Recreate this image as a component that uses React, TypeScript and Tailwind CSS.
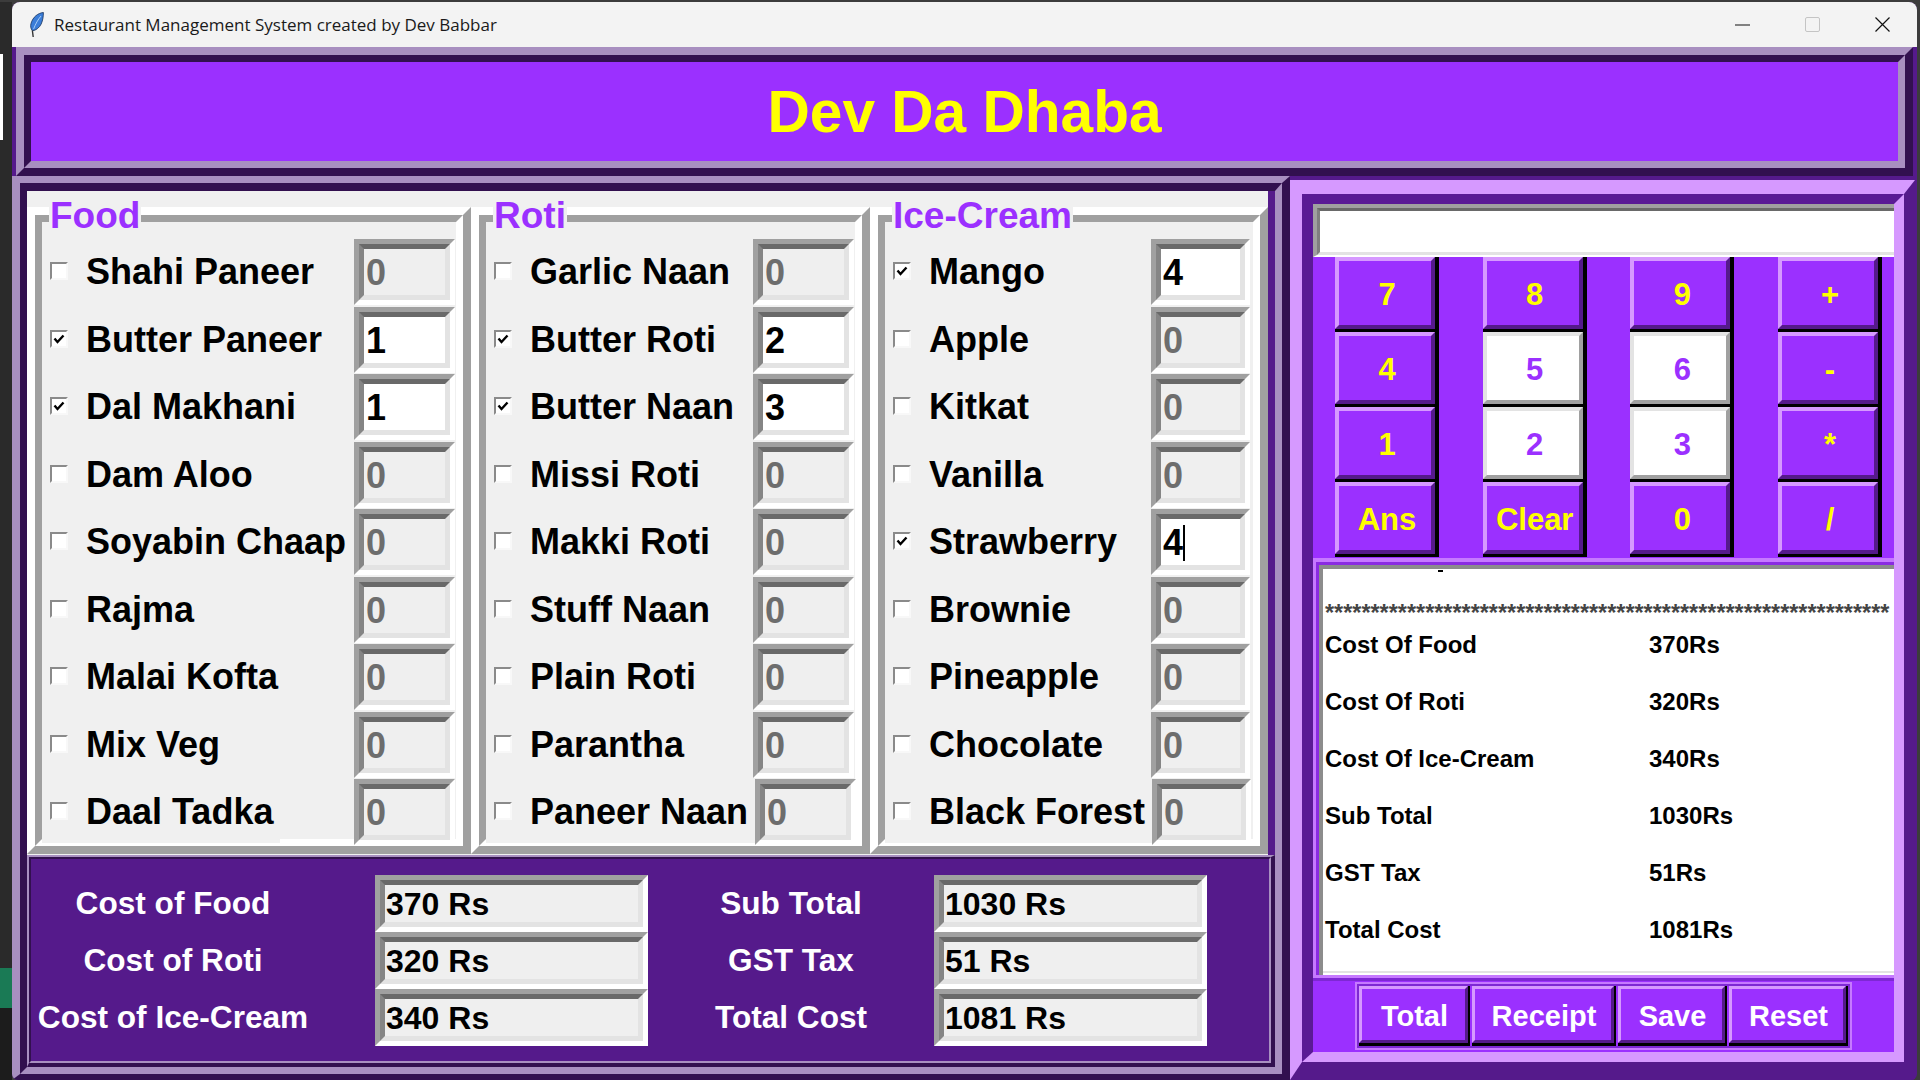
const food = [
  ["Shahi Paneer", "0"],
  ["Butter Paneer", "1"],
  ["Dal Makhani", "1"],
  ["Dam Aloo", "0"],
  ["Soyabin Chaap", "0"],
  ["Rajma", "0"],
  ["Malai Kofta", "0"],
  ["Mix Veg", "0"],
  ["Daal Tadka", "0"],
];

const roti = [
  ["Garlic Naan", "0"],
  ["Butter Roti", "2"],
  ["Butter Naan", "3"],
  ["Missi Roti", "0"],
  ["Makki Roti", "0"],
  ["Stuff Naan", "0"],
  ["Plain Roti", "0"],
  ["Parantha", "0"],
  ["Paneer Naan", "0"],
];

const iceCream = [
  ["Mango", "4"],
  ["Apple", "0"],
  ["Kitkat", "0"],
  ["Vanilla", "0"],
  ["Strawberry", "4"],
  ["Brownie", "0"],
  ["Pineapple", "0"],
  ["Chocolate", "0"],
  ["Black Forest", "0"],
];

const calcKeys = [
  { key: "7" },
  { key: "8" },
  { key: "9" },
  { key: "+" },
  { key: "4" },
  { key: "5", white: true },
  { key: "6", white: true },
  { key: "-" },
  { key: "1" },
  { key: "2", white: true },
  { key: "3", white: true },
  { key: "*" },
  { key: "Ans" },
  { key: "Clear" },
  { key: "0" },
  { key: "/" },
];

const receiptLines = [
  ["Cost Of Food", "370Rs"],
  ["Cost Of Roti", "320Rs"],
  ["Cost Of Ice-Cream", "340Rs"],
  ["Sub Total", "1030Rs"],
  ["GST Tax", "51Rs"],
  ["Total Cost", "1081Rs"],
];

const actions = [
  { label: "Total", width: "w-[111px]" },
  { label: "Receipt", width: "w-[144px]" },
  { label: "Save", width: "w-[109px]" },
  { label: "Reset", width: "w-[119px]" },
];

function Feather() {
  return (
    <svg viewBox="0 0 14 26" className="w-[14px] h-[26px] shrink-0">
      <path d="M13.4 0.5C8 1 2.8 5 1 11.5C0.3 14 0.6 16.5 2.4 18.8C6 18.5 9.5 15.5 11.2 12C13 8 13.4 4 13.4 0.5Z" fill="#3b7dd8" stroke="#16325c" strokeWidth="0.8" />
      <path d="M11 4C8 7.5 5.5 12 3.6 17" fill="none" stroke="#a8cdf5" strokeWidth="1" />
      <path d="M2.4 18.5L3.2 25" fill="none" stroke="#333" strokeWidth="1.4" />
    </svg>
  );
}

function WindowControls() {
  return (
    <div className="flex items-center">
      <svg viewBox="0 0 15 15" className="w-[15px] h-[15px] mr-[55px]">
        <path d="M0 8H15" stroke="#111" strokeWidth="1.2" />
      </svg>
      <svg viewBox="0 0 15 15" className="w-[15px] h-[15px] mr-[55px]">
        <rect x="0.5" y="0.5" width="14" height="14" rx="1.5" fill="none" stroke="#c4c4c4" strokeWidth="1" />
      </svg>
      <svg viewBox="0 0 15 15" className="w-[15px] h-[15px]">
        <path d="M0.5 0.5L14.5 14.5M14.5 0.5L0.5 14.5" stroke="#111" strokeWidth="1.2" />
      </svg>
    </div>
  );
}

function Checkbox({ checked }: { checked: boolean }) {
  return (
    <div className="w-[18px] h-[18px] shrink-0 border-2 border-t-[#8a8a8a] border-l-[#8a8a8a] border-r-[#f8f8f8] border-b-[#f8f8f8] bg-white">
      {checked && (
        <svg viewBox="0 0 14 14" className="w-[14px] h-[14px]">
          <path d="M2.5 6.5L5.5 10L11.5 3.5" fill="none" stroke="#000" strokeWidth="2.4" />
        </svg>
      )}
    </div>
  );
}

function QtyEntry({ value, width, caret }: { value: string; width: string; caret?: boolean }) {
  const active = value !== "0";
  return (
    <div className={`${width} h-[66px] shrink-0 border-[5px] border-t-[#a0a0a0] border-l-[#a0a0a0] border-r-white border-b-white`}>
      <div className={`h-full flex items-center pl-[2px] pt-[2px] border-[5px] border-t-[#696969] border-l-[#858585] border-r-[#e3e3e3] border-b-[#e3e3e3] text-[36px] font-bold leading-none ${active ? "bg-white text-black" : "bg-[#efefef] text-[#6d6d6d]"}`}>
        {value}
        {caret && <span className="w-[2px] h-[36px] bg-black" />}
      </div>
    </div>
  );
}

function MenuFrame({ title, items, width, entryWidth, pr }: { title: string; items: string[][]; width: string; entryWidth: string; pr: string }) {
  return (
    <div className={`${width} h-full relative border-[8px] border-t-white border-l-white border-r-[#a0a0a0] border-b-[#a0a0a0]`}>
      <div className="h-full border-[7px] border-t-[#a0a0a0] border-l-[#a0a0a0] border-r-white border-b-white">
        <div className={`pt-[17px] ${pr}`}>
          {items.map(([name, value]) => (
            <div key={name} className="flex items-start justify-between h-[66px] mb-[1.5px]">
              <div className="flex items-center h-[64px] pl-[8px] pr-[7px] bg-[#f0f0f0]">
                <Checkbox checked={value !== "0"} />
                <span className="ml-[18px] pt-[2px] text-[36px] font-bold text-black leading-none whitespace-nowrap">{name}</span>
              </div>
              <QtyEntry value={value} width={entryWidth} caret={name === "Strawberry"} />
            </div>
          ))}
        </div>
      </div>
      <div className="absolute left-[14px] top-[-18px] px-[1px] bg-[#f0f0f0] text-[37px] font-bold text-[#9b30ff] leading-[38px]">{title}</div>
    </div>
  );
}

function CostEntry({ value, width }: { value: string; width: string }) {
  return (
    <div className={`${width} h-[57px] border-[5px] border-t-[#a0a0a0] border-l-[#a0a0a0] border-r-white border-b-white`}>
      <div className="h-full flex items-center pl-[1px] border-[5px] border-t-[#696969] border-l-[#858585] border-r-[#e3e3e3] border-b-[#e3e3e3] bg-[#efefef] text-[32px] font-bold text-black leading-none">
        {value}
      </div>
    </div>
  );
}

function CostRow({ left, leftValue, right, rightValue }: { left: string; leftValue: string; right: string; rightValue: string }) {
  return (
    <div className="flex items-center h-[57px]">
      <div className="w-[284px] mr-[60px] text-center text-[31.6px] font-bold text-white whitespace-nowrap">{left}</div>
      <CostEntry value={leftValue} width="w-[273px]" />
      <div className="w-[286px] text-center text-[31.6px] font-bold text-white whitespace-nowrap">{right}</div>
      <CostEntry value={rightValue} width="w-[273px]" />
    </div>
  );
}

function CalcButton({ label, white }: { label: string; white?: boolean }) {
  return (
    <div className="h-[75px] border-r-[4px] border-b-[3px] border-black">
      <div className={`h-full flex items-center justify-center pl-[4px] pt-[3px] border-[4px] text-[31px] font-bold leading-none ${white ? "bg-white text-[#9b30ff] border-t-[#e3e3e3] border-l-[#e3e3e3] border-r-[#a0a0a0] border-b-[#a0a0a0]" : "bg-[#9b30ff] text-[#ffff00] border-t-[#d699ff] border-l-[#d699ff] border-r-[#551a8b] border-b-[#551a8b]"}`}>
        {label}
      </div>
    </div>
  );
}

export default function App() {
  return (
    <div className="w-[1920px] h-[1080px] flex pt-[2px] pr-[3px] bg-[#3c3c3c] overflow-hidden font-['Liberation_Sans',sans-serif]">
      {/* desktop behind the window */}
      <div className="w-[12px] h-full flex flex-col bg-[#2a2a2a]">
        <div className="h-[52px]" />
        <div className="w-[3px] h-[86px] bg-white" />
        <div className="h-[828px]" />
        <div className="h-[40px] bg-[#1a7a55]" />
        <div className="flex-1 bg-[#1c1c1c]" />
      </div>

      <div className="flex-1 h-full flex flex-col rounded-t-[8px] rounded-b-[6px] overflow-hidden bg-[#551a8b]">
        {/* title bar */}
        <div className="h-[45px] shrink-0 flex items-center justify-between pl-[18px] pr-[27px] bg-[#f3f3f3]">
          <div className="flex items-center">
            <Feather />
            <span className="ml-[10px] text-[17px] text-[#1a1a1a] font-['Open_Sans',sans-serif] whitespace-nowrap">Restaurant Management System created by Dev Babbar</span>
          </div>
          <WindowControls />
        </div>

        {/* header */}
        <div className="h-[129px] shrink-0 ml-[4px] mr-[4px] border-[8px] border-t-[#a88fc0] border-l-[#a88fc0] border-r-[#32104f] border-b-[#32104f]">
          <div className="h-full flex items-center justify-center pt-[2px] border-[7px] border-t-[#32104f] border-l-[#32104f] border-r-[#a88fc0] border-b-[#a88fc0] bg-[#9b30ff]">
            <h1 className="text-[58.6px] font-bold text-[#ffff00] leading-none">Dev Da Dhaba</h1>
          </div>
        </div>

        <div className="flex-1 flex min-h-0">
          {/* left panel */}
          <div className="w-[1278px] h-[904px] shrink-0 border-[8px] border-t-[7px] border-b-[6px] border-t-[#a88fc0] border-l-[#a88fc0] border-r-[#32104f] border-b-[#32104f]">
            <div className="h-full flex flex-col border-[7px] border-t-[8px] border-l-[#32104f] border-t-[#32104f] border-r-[#a88fc0] border-b-[#a88fc0] bg-[#551a8b]">
              <div className="w-[1241px] h-[664px] shrink-0 flex pt-[16px] pb-[1px] bg-[#f0f0f0]">
                <MenuFrame title="Food" items={food} width="w-[444px]" entryWidth="w-[101px]" pr="pr-[1px]" />
                <MenuFrame title="Roti" items={roti} width="w-[399px]" entryWidth="w-[101px]" pr="pr-[1px]" />
                <MenuFrame title="Ice-Cream" items={iceCream} width="w-[398px]" entryWidth="w-[99px]" pr="pr-[3px]" />
              </div>

              {/* cost panel */}
              <div className="flex-1 border-[2px] border-r-[4px] border-b-[4px] border-t-[#a88fc0] border-l-[#a88fc0] border-r-[#32104f] border-b-[#32104f]">
                <div className="h-full border-[2px] border-t-[#32104f] border-l-[#32104f] border-r-[#a88fc0] border-b-[#a88fc0] pt-[16px] bg-[#551a8b]">
                  <CostRow left="Cost of Food" leftValue="370 Rs" right="Sub Total" rightValue="1030 Rs" />
                  <CostRow left="Cost of Roti" leftValue="320 Rs" right="GST Tax" rightValue="51 Rs" />
                  <CostRow left="Cost of Ice-Cream" leftValue="340 Rs" right="Total Cost" rightValue="1081 Rs" />
                </div>
              </div>
            </div>
          </div>

          {/* right panel */}
          <div className="flex-1 pt-[4px] pr-[2px]">
            <div className="h-full border-t-[14px] border-l-[12px] border-r-[11px] border-b-[18px] border-t-[#d699ff] border-l-[#d699ff] border-r-[#551a8b] border-b-[#551a8b]">
              <div className="h-full flex flex-col border-[10px] border-l-[11px] border-t-[#5a1a95] border-l-[#5a1a95] border-r-[#d699ff] border-b-[#d699ff]">
                {/* calculator display */}
                <div className="h-[53px] shrink-0 border-t-[4px] border-l-[4px] border-b-[2px] border-t-[#a0a0a0] border-l-[#a0a0a0] border-b-white bg-white">
                  <div className="h-full border-t-[3px] border-l-[3px] border-b-[3px] border-t-[#696969] border-l-[#808080] border-b-[#e3e3e3]" />
                </div>

                <div className="h-[300px] shrink-0 grid grid-cols-4 gap-x-[43.67px] pl-[22px] pr-[12px] bg-[#9b30ff]">
                  {calcKeys.map((k) => (
                    <CalcButton key={k.key} label={k.key} white={k.white} />
                  ))}
                </div>

                {/* receipt */}
                <div className="h-[421px] shrink-0 pt-[1px] bg-[#9b30ff]">
                  <div className="h-full border-t-[4px] border-l-[3px] border-b-[3px] border-[#c679ff] pl-[3px] pt-[3px] bg-[#8a2be2]">
                    <div className="relative h-full border-t-[4px] border-l-[4px] border-[#8c8c8c] bg-white pl-[2px] overflow-hidden">
                      <div className="absolute left-[115px] top-[1px] w-[5px] h-[2px] bg-black" />
                      <div className="h-[47px] pt-[32px] text-[23.4px] font-bold leading-[24px] text-[#444] whitespace-nowrap">
                        **************************************************************
                      </div>
                      {receiptLines.map(([label, value]) => (
                        <div key={label} className="flex items-center h-[57px] text-[24px] font-bold text-black leading-none">
                          <span className="w-[324px]">{label}</span>
                          <span>{value}</span>
                        </div>
                      ))}
                      <div className="absolute left-0 right-0 bottom-[2px] h-[2px] bg-[#e3e3e3]" />
                    </div>
                  </div>
                </div>

                {/* actions */}
                <div className="flex-1 border-t-[3px] border-[#7e28d4] pl-[42px] pt-[1px] bg-[#9b30ff]">
                  <div className="w-[497px] h-[68px] border-[2px] border-[#c679ff]">
                    <div className="h-full flex gap-x-[2px] border-[2px] border-[#7e28d4]">
                      {actions.map((a) => (
                        <div key={a.label} className={`${a.width} h-full border-r-[2px] border-b-[3px] border-black`}>
                          <div className="h-full flex items-center justify-center pt-[3px] pl-[2px] border-[3px] border-t-[#d699ff] border-l-[#d699ff] border-r-[#551a8b] border-b-[#551a8b] bg-[#9b30ff] text-[29px] font-bold text-white leading-none">
                            {a.label}
                          </div>
                        </div>
                      ))}
                    </div>
                  </div>
                </div>
              </div>
            </div>
          </div>
        </div>
      </div>
    </div>
  );
}
